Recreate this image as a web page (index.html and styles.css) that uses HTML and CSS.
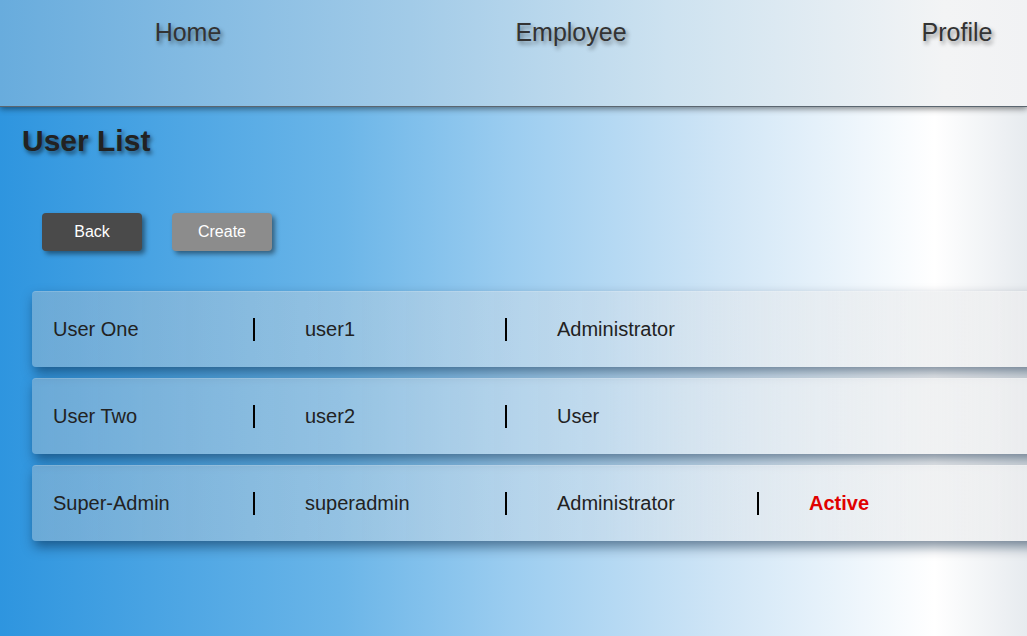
FILE: index.html
```html
<!DOCTYPE html>
<html lang="en">
<head>
<meta charset="utf-8">
<title>User List</title>
<link rel="stylesheet" href="styles.css">
</head>
<body>
<header class="topbar">
  <nav class="nav">
    <a class="nav-item" href="#">Home</a>
    <a class="nav-item" href="#">Employee</a>
    <a class="nav-item" href="#">Profile</a>
  </nav>
</header>
<main class="page">
  <h1 class="title">User List</h1>
  <div class="actions">
    <button class="btn btn-back">Back</button>
    <button class="btn btn-create">Create</button>
  </div>
  <div class="list">
    <div class="row">
      <span class="cell">User One</span><span class="sep"></span>
      <span class="cell">user1</span><span class="sep"></span>
      <span class="cell">Administrator</span>
    </div>
    <div class="row">
      <span class="cell">User Two</span><span class="sep"></span>
      <span class="cell">user2</span><span class="sep"></span>
      <span class="cell">User</span>
    </div>
    <div class="row">
      <span class="cell">Super-Admin</span><span class="sep"></span>
      <span class="cell">superadmin</span><span class="sep"></span>
      <span class="cell">Administrator</span><span class="sep"></span>
      <span class="cell status-active">Active</span>
    </div>
  </div>
</main>
</body>
</html>
```
FILE: styles.css
```css
html, body {
  margin: 0;
  padding: 0;
}
body {
  min-height: 636px;
  overflow: hidden;
  font-family: "Liberation Sans", Arial, sans-serif;
  background: linear-gradient(to right, #2e95df 0%, #6ab5e8 33%, #9ccdf0 50%, #cfe5f6 70%, #ffffff 91%, #e7ebef 100%);
}
.topbar {
  height: 106px;
  overflow: hidden;
  background: linear-gradient(to right, #68acdd 0%, #a2cbe8 40%, #cde2f0 65%, #f3f4f5 92%, #f1f2f4 100%);
  box-shadow: 0 1px 0 #5b6670, 0 3px 6px rgba(0, 0, 0, 0.45);
  position: relative;
  z-index: 1;
}
.nav {
  display: grid;
  grid-template-columns: 376px 390px 382px;
  justify-items: center;
  padding-top: 18px;
}
.nav-item {
  font-size: 25px;
  line-height: 29px;
  color: #333;
  text-decoration: none;
  text-shadow: 2px 3px 4px rgba(0, 0, 0, 0.45);
}
.page {
  padding-top: 18px;
}
.title {
  margin: 0;
  padding-left: 22px;
  font-size: 30px;
  line-height: 34px;
  font-weight: bold;
  color: #222;
  text-shadow: 2px 3px 4px rgba(0, 0, 0, 0.55);
}
.actions {
  display: flex;
  gap: 30px;
  padding-left: 42px;
  margin-top: 55px;
}
.btn {
  width: 100px;
  height: 38px;
  border: none;
  border-radius: 4px;
  color: #fff;
  font-family: "Liberation Sans", Arial, sans-serif;
  font-size: 16px;
  padding: 0 0 1px;
  box-shadow: 3px 3px 5px rgba(0, 0, 0, 0.45);
}
.btn-back {
  background: #4a4a4a;
}
.btn-create {
  background: #8c8c8c;
}
.list {
  display: flex;
  flex-direction: column;
  gap: 11px;
  margin-top: 40px;
  margin-left: 32px;
}
.row {
  width: 1040px;
  height: 76px;
  display: flex;
  align-items: center;
  padding-left: 21px;
  box-sizing: border-box;
  border-radius: 4px;
  background: linear-gradient(to right, rgba(190, 196, 202, 0.4) 0%, rgba(215, 224, 232, 0.45) 55%, rgba(238, 239, 240, 0.85) 92%, rgba(230, 232, 235, 0.8) 100%);
  border-top: 1px solid rgba(255, 255, 255, 0.15);
  box-shadow: 2px 6px 12px rgba(0, 30, 60, 0.5);
}
.cell {
  width: 200px;
  font-size: 20px;
  color: #222;
}
.sep {
  width: 2px;
  height: 23px;
  background: #000;
  margin-right: 50px;
}
.status-active {
  color: #e00000;
  font-weight: bold;
}
```
